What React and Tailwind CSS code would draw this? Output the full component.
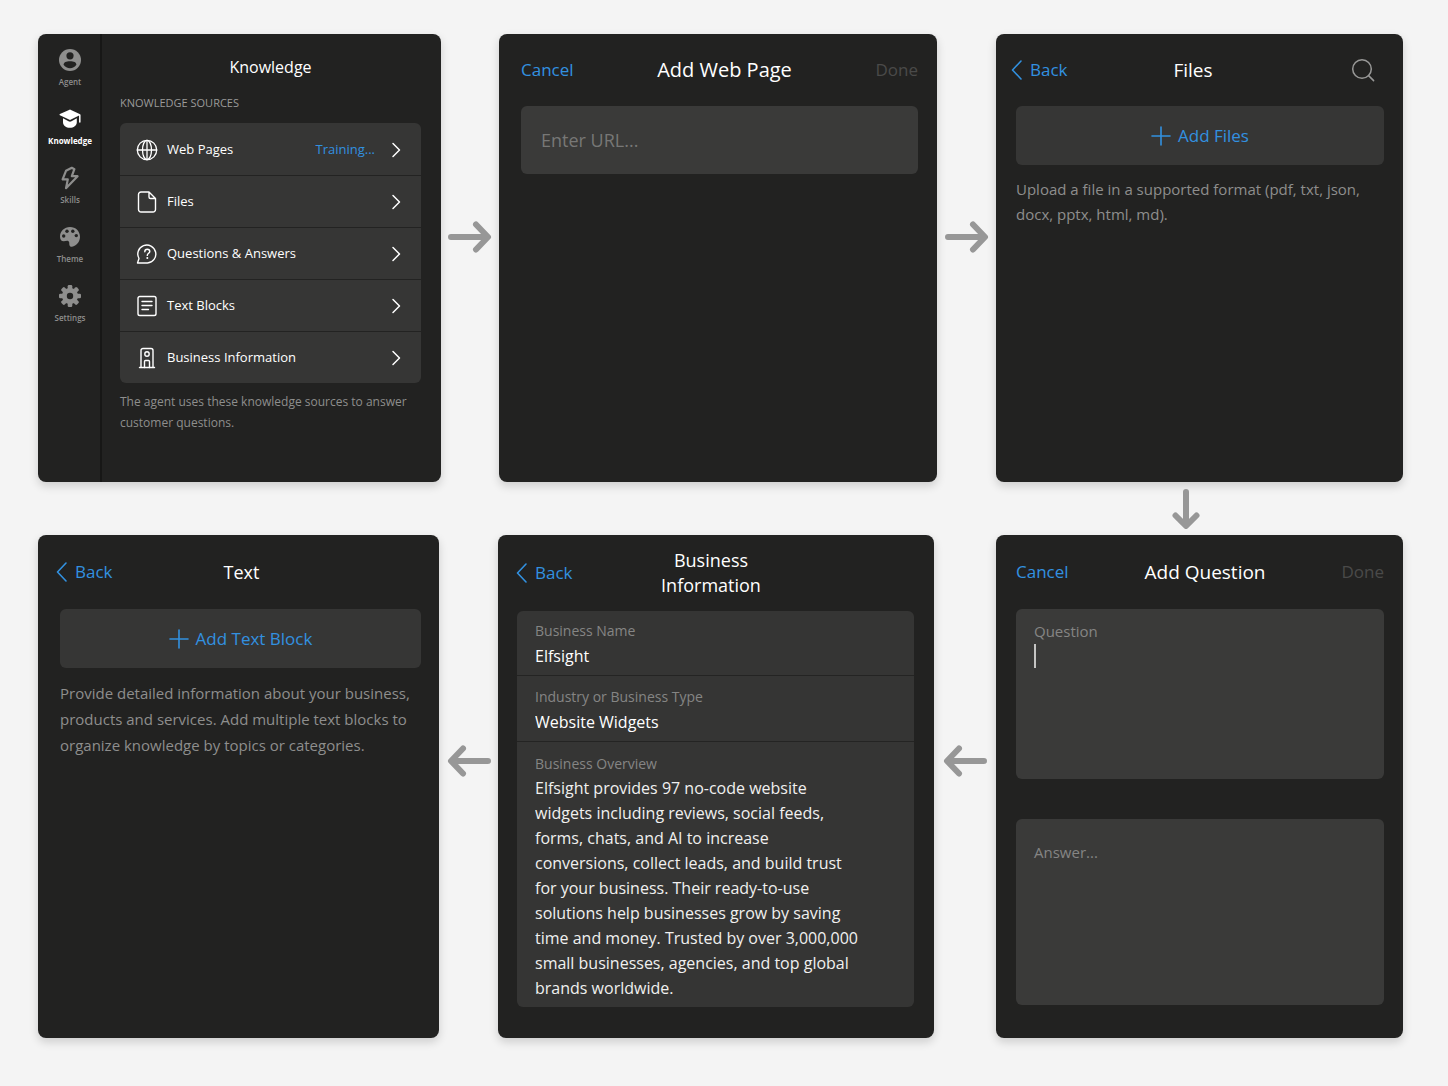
import React from "react";

const OVERVIEW =
  "Elfsight provides 97 no-code website widgets including reviews, social feeds, forms, chats, and AI to increase conversions, collect leads, and build trust for your business. Their ready-to-use solutions help businesses grow by saving time and money. Trusted by over 3,000,000 small businesses, agencies, and top global brands worldwide.";

const line = { fill: "none", stroke: "currentColor", strokeLinecap: "round", strokeLinejoin: "round" };

/* ---------- sidebar icons ---------- */

const AgentIcon = () => (
  <svg viewBox="0 0 24 24" className="size-6" aria-hidden="true">
    <circle cx="12" cy="12" r="11" fill="currentColor" />
    <circle cx="12" cy="7.800" r="3.600" fill="#222221" />
    <path d="M5.600 16.800c0-2.400 2.600-3.500 6.400-3.500s6.400 1.100 6.400 3.500c-1.500 2.200-3.800 3.400-6.400 3.400s-4.900-1.200-6.400-3.400z" fill="#222221" />
  </svg>
);

const KnowledgeIcon = () => (
  <svg viewBox="0 0 24 24" className="size-6" aria-hidden="true">
    <path d="M11 2.900a2 2 0 0 1 2 0l8.600 4.200a.6.6 0 0 1 0 1.100L13 12.600a2 2 0 0 1-2 0L1.900 8.200a.6.6 0 0 1 0-1.100z" fill="currentColor" />
    <path d="M5 11.300l5.500 2.900a3 3 0 0 0 3 0l5.300-2.900v3.900c0 3.300-3.200 5.600-6.900 5.600S5 18.500 5 15.200z" fill="currentColor" />
    <path d="M21.800 8v7" stroke="currentColor" strokeWidth="1.500" strokeLinecap="round" />
  </svg>
);

const SkillsIcon = () => (
  <svg viewBox="0 0 24 24" className="size-6" aria-hidden="true">
    <path {...line} strokeWidth="2.200" d="M13.800 1.800L8 4.800 4.600 13.400h5.200L8 22.200 19.600 10.200h-5.800l2.600-7z" />
  </svg>
);

const ThemeIcon = () => (
  <svg viewBox="0 0 24 24" className="size-6" aria-hidden="true">
    <path d="M12 2C6.300 2 2 6.300 2 11.400c0 3.200 1.500 4.900 3.700 4.900 1.700 0 3.100-.9 4.500-.3 1.500.7.900 2.500 1.200 4.100.3 1.400 1.300 1.900 2.600 1.700C18.500 21 22 16.800 22 11.800 22 6.200 17.700 2 12 2z" fill="currentColor" />
    <circle cx="5.700" cy="11" r="1.700" fill="#222221" />
    <circle cx="9" cy="6.300" r="1.700" fill="#222221" />
    <circle cx="14.800" cy="6.200" r="1.700" fill="#222221" />
    <circle cx="18.300" cy="10.600" r="1.700" fill="#222221" />
  </svg>
);

const SettingsIcon = () => (
  <svg viewBox="0 0 24 24" className="size-6" aria-hidden="true">
    <g fill="currentColor">
      {[0, 45, 90, 135].map((a) => (
        <rect key={a} x="9.700" y="1" width="4.600" height="22" rx="1.300" transform={`rotate(${a} 12 12)`} />
      ))}
      <circle cx="12" cy="12" r="8" />
    </g>
    <circle cx="12" cy="12" r="3.200" fill="#222221" />
  </svg>
);

/* ---------- list icons ---------- */

const GlobeIcon = () => (
  <svg viewBox="0 0 22 22" className="size-[22px]" aria-hidden="true">
    <g {...line} strokeWidth="1.300">
      <circle cx="11" cy="11" r="9.700" />
      <ellipse cx="11" cy="11" rx="4.500" ry="9.700" />
      <path d="M1.300 11h19.400M11 1.300v19.400" />
    </g>
  </svg>
);

const FileIcon = () => (
  <svg viewBox="0 0 22 22" className="size-[22px]" aria-hidden="true">
    <path {...line} strokeWidth="1.400" d="M13 1H5a2.500 2.500 0 0 0-2.500 2.500v15A2.500 2.500 0 0 0 5 21h12a2.500 2.500 0 0 0 2.500-2.500V7.500zM13 1v5a1.500 1.500 0 0 0 1.500 1.500h5" />
  </svg>
);

const QuestionIcon = () => (
  <svg viewBox="0 0 22 22" className="size-[22px]" aria-hidden="true">
    <g {...line} strokeWidth="1.400">
      <path d="M1.500 20l1.500-4.500A9 9 0 1 1 11.500 20z" />
      <path d="M8.800 8.700c0-1.500 1-2.400 2.500-2.400s2.500.9 2.500 2.200c0 1.700-2.500 2-2.500 3.900" />
    </g>
    <circle cx="11.300" cy="15" r="1" fill="currentColor" />
  </svg>
);

const TextIcon = () => (
  <svg viewBox="0 0 22 22" className="size-[22px]" aria-hidden="true">
    <g {...line} strokeWidth="1.400">
      <rect x="2" y="1.500" width="18" height="19" rx="1.800" />
      <path d="M6 6.500h10M6 10.500h10M6 14.500h6.500" />
    </g>
  </svg>
);

const BuildingIcon = () => (
  <svg viewBox="0 0 22 22" className="size-[22px]" aria-hidden="true">
    <g {...line} strokeWidth="1.400">
      <path d="M3.500 20.500h15M5 20.500v-17a2 2 0 0 1 2-2h8a2 2 0 0 1 2 2v17" />
      <circle cx="11" cy="7" r="2.200" />
      <path d="M8.500 20.500v-6a1 1 0 0 1 1-1h3a1 1 0 0 1 1 1v6" />
    </g>
  </svg>
);

/* ---------- shared pieces ---------- */

const ChevronRight = () => (
  <svg viewBox="0 0 10 16" className="h-4 w-[10px]" aria-hidden="true">
    <path {...line} strokeWidth="1.500" d="M2 1.500L8.500 8 2 14.500" />
  </svg>
);

const Plus = () => (
  <svg viewBox="0 0 20 20" className="size-5" aria-hidden="true">
    <path {...line} strokeWidth="1.600" d="M10 1v18M1 10h18" />
  </svg>
);

const Arrow = ({ className = "" }) => (
  <svg viewBox="0 0 44 34" className={`h-[34px] w-11 shrink-0 text-[#979797] ${className}`} aria-hidden="true">
    <path {...line} strokeWidth="6" d="M3 17h36M28 4.500L40 17 28 29.500" />
  </svg>
);

const Card = ({ className = "", children }) => (
  <section className={`rounded-lg bg-[#222221] shadow-[0_4px_10px_rgba(0,0,0,0.16)] ${className}`}>{children}</section>
);

const Back = () => (
  <button type="button" className="flex items-center gap-2 justify-self-start text-[17px] text-[#3291e0]">
    <svg viewBox="0 0 11 20" className="h-5 w-[11px]" aria-hidden="true">
      <path {...line} strokeWidth="1.600" d="M10 1L1.500 10l8.500 9" />
    </svg>
    Back
  </button>
);

const Title = ({ size = "text-lg", children }) => (
  <h2 className={`text-center text-white ${size}`}>{children}</h2>
);

const ModalHeader = ({ title, size, className = "h-[72px]" }) => (
  <header className={`flex items-center justify-between ${className}`}>
    <button type="button" className="text-[17px] text-[#3291e0]">Cancel</button>
    <Title size={size}>{title}</Title>
    <button type="button" disabled className="text-[17px] text-[#4a4a49]">Done</button>
  </header>
);

const AddButton = ({ children }) => (
  <button type="button" className="flex h-[59px] w-full items-center justify-center gap-[7px] rounded-md bg-[#363635] text-[17px] text-[#3291e0]">
    <Plus />
    {children}
  </button>
);

const nav = [
  ["Agent", AgentIcon],
  ["Knowledge", KnowledgeIcon],
  ["Skills", SkillsIcon],
  ["Theme", ThemeIcon],
  ["Settings", SettingsIcon],
];

const sources = [
  ["Web Pages", GlobeIcon, "Training..."],
  ["Files", FileIcon],
  ["Questions & Answers", QuestionIcon],
  ["Text Blocks", TextIcon],
  ["Business Information", BuildingIcon],
];

/* ---------- screens ---------- */

const KnowledgeScreen = () => (
  <Card className="flex">
    <nav className="flex w-16 shrink-0 flex-col items-center gap-5 border-r-2 border-[#171716] pt-[14px] pl-[2px]">
      {nav.map(([label, Icon]) => (
        <a
          key={label}
          href={`#${label.toLowerCase()}`}
          className={
            label === "Knowledge"
              ? "flex flex-col items-center gap-[5px] text-[8px] leading-[10px] font-bold text-white"
              : "flex flex-col items-center gap-[5px] text-[8px] leading-[10px] font-semibold text-[#8e8e8d]"
          }
        >
          <Icon />
          {label}
        </a>
      ))}
    </nav>
    <div className="min-w-0 flex-1 px-[18px] pr-5 pt-[21px]">
      <h2 className="text-center text-base leading-6 text-white">Knowledge</h2>
      <h3 className="mt-4 text-[11px] leading-4 text-[#9a9a99]">KNOWLEDGE SOURCES</h3>
      <ul className="mt-3 divide-y divide-[#232322] overflow-hidden rounded-md bg-[#363635] pt-px">
        {sources.map(([label, Icon, status]) => (
          <li key={label}>
            <button type="button" className="flex h-[51px] w-full items-center px-4 pr-5 text-left text-[13px] text-white">
              <Icon />
              <span className="ml-[9px] flex-1">{label}</span>
              {status && <span className="mr-4 text-[#3291e0]">{status}</span>}
              <ChevronRight />
            </button>
          </li>
        ))}
      </ul>
      <p className="mt-2 text-xs leading-[21px] text-[#8e8e8d]">
        The agent uses these knowledge sources to answer customer questions.
      </p>
    </div>
  </Card>
);

const WebPageScreen = () => (
  <Card className="pr-[19px] pl-[22px]">
    <ModalHeader title="Add Web Page" size="text-xl" />
    <input
      type="url"
      aria-label="URL"
      placeholder="Enter URL..."
      className="h-[68px] w-full rounded-md bg-[#3a3a39] px-5 text-lg text-white outline-none placeholder:text-[#777776]"
    />
  </Card>
);

const FilesScreen = () => (
  <Card>
    <header className="grid h-[72px] grid-cols-[1fr_auto_1fr] items-center pr-7 pl-[15px]">
      <Back />
      <Title size="text-[19px]">Files</Title>
      <button type="button" aria-label="Search" className="justify-self-end text-[#989897]">
        <svg viewBox="0 0 24 24" className="size-6" aria-hidden="true">
          <g {...line} strokeWidth="1.500">
            <circle cx="11" cy="11" r="9.300" />
            <path d="M17.600 17.600l5 5" />
          </g>
        </svg>
      </button>
    </header>
    <div className="pr-[19px] pl-5">
      <AddButton>Add Files</AddButton>
      <p className="mt-3 text-[15px] leading-[25px] text-[#8e8e8d]">
        Upload a file in a supported format (pdf, txt, json, docx, pptx, html, md).
      </p>
    </div>
  </Card>
);

const TextScreen = () => (
  <Card>
    <header className="grid h-[74px] grid-cols-[1fr_auto_1fr] items-center pr-3 pl-[18px]">
      <Back />
      <Title>Text</Title>
    </header>
    <div className="pr-[18px] pl-[22px]">
      <AddButton>Add Text Block</AddButton>
      <p className="mt-3 text-[15px] leading-[26px] text-[#8e8e8d]">
        Provide detailed information about your business, products and services. Add multiple text blocks to organize
        knowledge by topics or categories.
      </p>
    </div>
  </Card>
);

const BusinessScreen = () => (
  <Card>
    <header className="grid h-[76px] grid-cols-[1fr_auto_1fr] items-center pr-7 pl-[18px]">
      <Back />
      <Title size="text-lg/[25px]">
        Business
        <br />
        Information
      </Title>
    </header>
    <form className="mr-5 ml-[19px] divide-y divide-[#242423] rounded-md bg-[#353534]">
      <div className="flex flex-col px-[18px] pt-[7px] pb-[7px]">
        <label htmlFor="biz-name" className="text-sm leading-[25px] text-[#858584]">Business Name</label>
        <input id="biz-name" defaultValue="Elfsight" className="h-[25px] w-full text-base text-white outline-none" />
      </div>
      <div className="flex flex-col px-[18px] pt-2 pb-[7px]">
        <label htmlFor="biz-type" className="text-sm leading-[25px] text-[#858584]">Industry or Business Type</label>
        <input id="biz-type" defaultValue="Website Widgets" className="h-[25px] w-full text-base text-white outline-none" />
      </div>
      <div className="flex flex-col px-[18px] pt-[9px] pb-[6px]">
        <label htmlFor="biz-overview" className="text-sm leading-[25px] text-[#858584]">Business Overview</label>
        <textarea
          id="biz-overview"
          rows={9}
          defaultValue={OVERVIEW}
          className="w-full resize-none overflow-hidden pr-9 text-base leading-[25px] text-[#f0f0ef] outline-none"
        />
      </div>
    </form>
  </Card>
);

const QuestionScreen = () => (
  <Card className="pr-[19px] pl-5">
    <ModalHeader title="Add Question" size="text-[19px]" className="h-[74px]" />
    <div className="flex h-[170px] flex-col rounded-md bg-[#3a3a39] px-[18px] pt-[10px] pb-3">
      <label htmlFor="question" className="text-[15px] leading-[25px] text-[#858584]">Question</label>
      <div className="flex flex-1">
        <span className="h-6 w-[2px] bg-[#c4c4c3]" />
        <textarea id="question" className="flex-1 resize-none text-[15px] text-white caret-transparent outline-none" />
      </div>
    </div>
    <textarea
      aria-label="Answer"
      placeholder="Answer..."
      className="mt-10 block h-[186px] w-full resize-none rounded-md bg-[#3a3a39] px-[18px] pt-[21px] text-[15px] leading-[25px] text-white outline-none placeholder:text-[#858584]"
    />
  </Card>
);

export default function App() {
  return (
    <main className="min-h-screen bg-[#f4f4f4] pt-[34px] pr-[45px] pb-12 pl-[38px] font-['Open_Sans','Noto_Sans',sans-serif]">
      <div className="grid min-h-[448px] grid-cols-[403fr_58px_438fr_59px_407fr]">
        <KnowledgeScreen />
        <div className="flex justify-center pt-[186px]"><Arrow /></div>
        <WebPageScreen />
        <div className="flex justify-center pt-[186px]"><Arrow /></div>
        <FilesScreen />
      </div>
      <div className="grid h-[53px] grid-cols-[403fr_58px_438fr_59px_407fr] items-center">
        <div className="col-start-5 mr-7 flex justify-center">
          <svg viewBox="0 0 30 40" className="h-10 w-[30px] text-[#979797]" aria-hidden="true">
            <path {...line} strokeWidth="6" d="M15 3v33M4.500 26.500L15 37l10.500-10.500" />
          </svg>
        </div>
      </div>
      <div className="grid min-h-[503px] grid-cols-[401fr_59px_436fr_62px_407fr]">
        <TextScreen />
        <div className="flex justify-center pt-[209px]"><Arrow className="rotate-180" /></div>
        <BusinessScreen />
        <div className="flex justify-center pt-[209px]"><Arrow className="rotate-180" /></div>
        <QuestionScreen />
      </div>
    </main>
  );
}
